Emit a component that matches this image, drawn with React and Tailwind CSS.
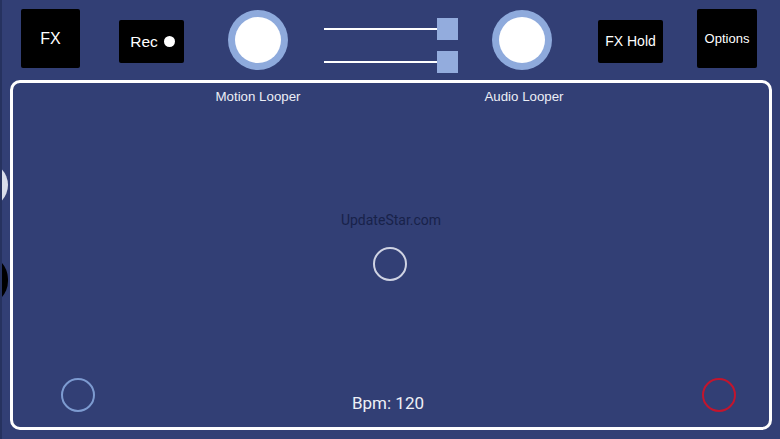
import React from "react";

function Knob() {
  return (
    <div className="w-[60px] h-[60px] rounded-full bg-[#8eaadc] flex items-center justify-center">
      <div className="w-[46px] h-[46px] rounded-full bg-white" />
    </div>
  );
}

function Slider({ className = "" }) {
  return (
    <div className={"flex items-center " + className}>
      <div className="w-[113px] h-[2px] bg-white" />
      <div className="w-[21px] h-[22px] bg-[#93acdd]" />
    </div>
  );
}

export default function App() {
  return (
    <div
      className="relative w-[780px] h-[439px] overflow-hidden bg-[#323f75] border-l-[2px] border-[#26325f]"
      style={{ fontFamily: '"Liberation Sans", Arial, sans-serif' }}
    >
      {/* off-screen edge circles */}
      <div className="absolute left-[-40px] top-[162px] w-[46px] h-[46px] rounded-full bg-[#d9deeb]" />
      <div className="absolute left-[-42px] top-[255px] w-[48px] h-[50px] rounded-full bg-black" />

      {/* top bar */}
      <div className="flex items-start h-[80px] pl-[19px]">
        <div className="mt-[9px] w-[59px] h-[59px] bg-black rounded-[2px] flex items-center justify-center text-white text-[16px]">
          FX
        </div>
        <div className="mt-[20px] ml-[39px] w-[65px] h-[43px] bg-black rounded-[2px] flex items-center justify-center gap-[6px] text-white text-[15.5px] pl-[2px]">
          <span>Rec</span>
          <span className="w-[11px] h-[11px] rounded-full bg-white" />
        </div>
        <div className="mt-[10px] ml-[44px]">
          <Knob />
        </div>
        <div className="mt-[18px] ml-[36px] flex flex-col gap-[11px]">
          <Slider />
          <Slider />
        </div>
        <div className="mt-[10px] ml-[34px]">
          <Knob />
        </div>
        <div className="mt-[20px] ml-[46px] w-[65px] h-[43px] bg-black rounded-[2px] flex items-center justify-center text-white text-[14px]">
          FX Hold
        </div>
        <div className="mt-[9px] ml-[34px] w-[60px] h-[59px] bg-black rounded-[2px] flex items-center justify-center text-white text-[13px]">
          Options
        </div>
      </div>

      {/* main frame */}
      <div className="ml-[8px] w-[762px] h-[350px] border-[3px] border-white rounded-[10px] flex flex-col">
        <div className="flex pt-[6px] text-[13.3px] leading-[16px] text-[#eceef5]">
          <div className="ml-[185px] w-[120px] text-center">Motion Looper</div>
          <div className="ml-[146px] w-[120px] text-center">Audio Looper</div>
        </div>
        <div className="mt-[106px] text-center text-[14px] leading-[18px] text-[#18224a]" style={{ fontFamily: 'Roboto, "Liberation Sans", sans-serif' }}>
          UpdateStar.com
        </div>
        <div className="mt-[18px] self-center ml-[-2px] w-[34px] h-[34px] rounded-full border-[2.5px] border-[#cfd3e3]" />
        <div className="mt-[97px] flex items-start">
          <div className="ml-[48px] w-[34px] h-[34px] rounded-full border-[2.5px] border-[#7d9bd1]" />
          <div
            className="ml-[193px] w-[200px] mt-[16px] text-center text-[17px] leading-[18px] text-[#eef0f6]"
            style={{ fontFamily: 'Roboto, "Liberation Sans", sans-serif' }}
          >
            Bpm: 120
          </div>
          <div className="ml-[214px] w-[34px] h-[34px] rounded-full border-[2.5px] border-[#c3152d]" />
        </div>
      </div>
    </div>
  );
}
